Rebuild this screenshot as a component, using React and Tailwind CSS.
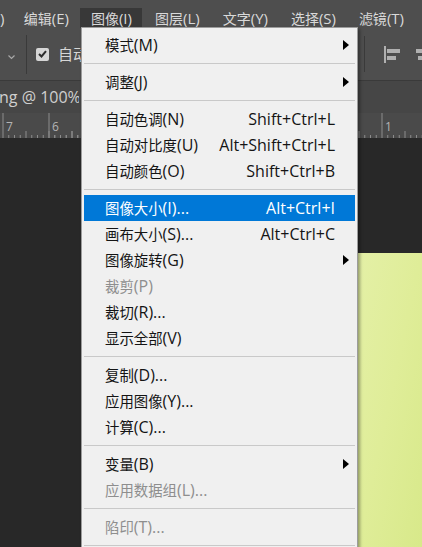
import React from "react";

const CJK = /([\u3400-\u9fff]+)/;

function Mixed({ text, cjk, latin }) {
  const parts = text.split(CJK).filter(Boolean);
  return parts.map((p, i) =>
    CJK.test(p) ? (
      <span key={i} className={cjk}>{p}</span>
    ) : (
      <span key={i} className={latin}>{p}</span>
    )
  );
}

const menuCjk = "text-[14.4px] font-['Noto_Sans_CJK_SC',sans-serif]";
const menuLatin = "text-[16px] font-['Open_Sans','Noto_Sans_CJK_SC',sans-serif]";
const barCjk = "text-[14px] font-['Noto_Sans_CJK_SC',sans-serif]";
const barLatin = "text-[15px] font-['Open_Sans','Noto_Sans_CJK_SC',sans-serif]";

const topMenus = [
  { label: "编辑(E)", w: "w-[68px]" },
  { label: "图像(I)", w: "w-[62px]", open: true },
  { label: "图层(L)", w: "w-[70px]" },
  { label: "文字(Y)", w: "w-[66px]" },
  { label: "选择(S)", w: "w-[70px]" },
  { label: "滤镜(T)", w: "w-[66px]" },
];

const items = [
  { label: "模式(M)", arrow: true },
  "sep",
  { label: "调整(J)", arrow: true },
  "sep",
  { label: "自动色调(N)", keys: "Shift+Ctrl+L" },
  { label: "自动对比度(U)", keys: "Alt+Shift+Ctrl+L" },
  { label: "自动颜色(O)", keys: "Shift+Ctrl+B" },
  "sep",
  { label: "图像大小(I)...", keys: "Alt+Ctrl+I", active: true },
  { label: "画布大小(S)...", keys: "Alt+Ctrl+C" },
  { label: "图像旋转(G)", arrow: true },
  { label: "裁剪(P)", disabled: true },
  { label: "裁切(R)..." },
  { label: "显示全部(V)" },
  "sep",
  { label: "复制(D)..." },
  { label: "应用图像(Y)..." },
  { label: "计算(C)..." },
  "sep",
  { label: "变量(B)", arrow: true },
  { label: "应用数据组(L)...", disabled: true },
  "sep",
  { label: "陷印(T)...", disabled: true },
  "sep",
];

function Ruler() {
  const ticks = [];
  const segs = [
    { start: 3, from: -1, to: 14 },
    { start: 49, from: 0, to: 6 },
    { start: 382, from: -4, to: 8 },
  ];
  segs.forEach((s, si) => {
    for (let k = s.from; k < s.to; k++) {
      const x = s.start + k * 5.75;
      const h = k === 0 ? 25 : k % 4 === 0 ? 7 : 3;
      ticks.push(<line key={si + "-" + k} x1={x} x2={x} y1={25 - h} y2={25} stroke="#8c8c8c" strokeWidth="1" />);
    }
  });
  return (
    <svg width="422" height="25" className="block">
      {ticks}
      <text x="6" y="18" fill="#b4b4b4" fontSize="12" fontFamily="Open Sans, sans-serif">7</text>
      <text x="52" y="18" fill="#b4b4b4" fontSize="12" fontFamily="Open Sans, sans-serif">6</text>
      <text x="385" y="18" fill="#b4b4b4" fontSize="12" fontFamily="Open Sans, sans-serif">1</text>
    </svg>
  );
}

function MenuRow({ item }) {
  const color = item.active ? "text-white" : item.disabled ? "text-[#8e8e8e]" : "text-[#141414]";
  return (
    <div className={`h-[26px] mx-[2px] flex items-center justify-between ${item.active ? "bg-[#0078d7]" : ""} ${color}`}>
      <span className="pl-[21px] leading-none whitespace-nowrap">
        <Mixed text={item.label} cjk={menuCjk} latin={menuLatin} />
      </span>
      {item.keys && (
        <span className={`pr-[20px] leading-none whitespace-nowrap ${menuLatin}`}>{item.keys}</span>
      )}
      {item.arrow && (
        <svg width="6" height="10" viewBox="0 0 6 10" className="mr-[6px]">
          <path d="M0 0 L6 5 L0 10 Z" fill="#000" />
        </svg>
      )}
    </div>
  );
}

export default function App() {
  return (
    <div className="relative w-[422px] h-[547px] overflow-hidden bg-[#282828] flex flex-col">
      {/* menu bar */}
      <div className="h-[28px] bg-[#4e4e4e] flex items-end text-[#d9d9d9]">
        <span className={`pr-[8px] h-[20px] flex items-center ${barLatin}`}>)</span>
        {topMenus.map((m) => (
          <div
            key={m.label}
            className={`${m.w} h-[20px] flex items-center justify-center leading-none whitespace-nowrap ${m.open ? "bg-[#383838]" : ""}`}
          >
            <span>
              <Mixed text={m.label} cjk={barCjk} latin={barLatin} />
            </span>
          </div>
        ))}
      </div>

      {/* options bar */}
      <div className="h-[52px] bg-[#4e4e4e] flex items-center">
        <svg width="7" height="5" viewBox="0 0 7 5" className="ml-[8px] mt-[6px]">
          <path d="M0.5 0.5 L3.5 3.5 L6.5 0.5" fill="none" stroke="#a8a8a8" strokeWidth="1.2" />
        </svg>
        <div className="ml-[11px] w-px h-[39px] bg-[#3a3a3a]" />
        <div className="ml-[9px] w-[13px] h-[13px] rounded-[2px] bg-[#d6d6d6] flex items-center justify-center">
          <svg width="9" height="8" viewBox="0 0 9 8">
            <path d="M1 4 L3.5 6.5 L8 1.2" fill="none" stroke="#2c2c2c" strokeWidth="2" />
          </svg>
        </div>
        <span className={`ml-[9px] w-[23px] overflow-hidden whitespace-nowrap text-[#d6d6d6] ${barCjk} text-[15px]`}>自动</span>
        <div className="flex-1" />
        <div className="w-px h-[36px] bg-[#3a3a3a]" />
        <svg width="16" height="17" viewBox="0 0 16 17" className="ml-[19px]">
          <rect x="0" y="0" width="2" height="17" fill="#b0b0b0" />
          <rect x="3" y="3" width="13" height="4" fill="#b0b0b0" />
          <rect x="3" y="10" width="9" height="4" fill="#b0b0b0" />
        </svg>
        <svg width="16" height="17" viewBox="0 0 16 17" className="ml-[15px] -mr-[9px]">
          <rect x="7" y="0" width="2" height="17" fill="#b0b0b0" />
          <rect x="1" y="3" width="14" height="4" fill="#b0b0b0" />
          <rect x="3" y="10" width="10" height="4" fill="#b0b0b0" />
        </svg>
      </div>

      {/* document tab */}
      <div className="h-[33px] bg-[#464646] border-t border-[#3a3a3a] flex items-center">
        <span className={`-ml-[1px] w-[80px] overflow-hidden text-[#cfcfcf] ${barLatin} text-[16px] whitespace-nowrap`}>ng @ 100%</span>
      </div>

      {/* ruler */}
      <div className="h-[25px] bg-[#4a4a4a]">
        <Ruler />
      </div>

      {/* canvas */}
      <div className="flex-1 pt-[115px] pl-[358px] flex flex-col">
        <div className="flex-1 bg-gradient-to-br from-[#e4f0a6] via-[#dfed98] to-[#d8e98a]" />
      </div>

      {/* open dropdown */}
      <div className="absolute left-[81px] top-[27px] w-[277px] bg-[#f0f0f0] border border-[#9c9c9c] pt-[4px] shadow-[2px_2px_3px_rgba(0,0,0,0.35)]">
        {items.map((it, i) =>
          it === "sep" ? (
            <div key={i} className="h-[11px] mx-[2px] flex items-center">
              <div className="w-full h-px bg-[#c9c9c9]" />
            </div>
          ) : (
            <MenuRow key={i} item={it} />
          )
        )}
      </div>
    </div>
  );
}
